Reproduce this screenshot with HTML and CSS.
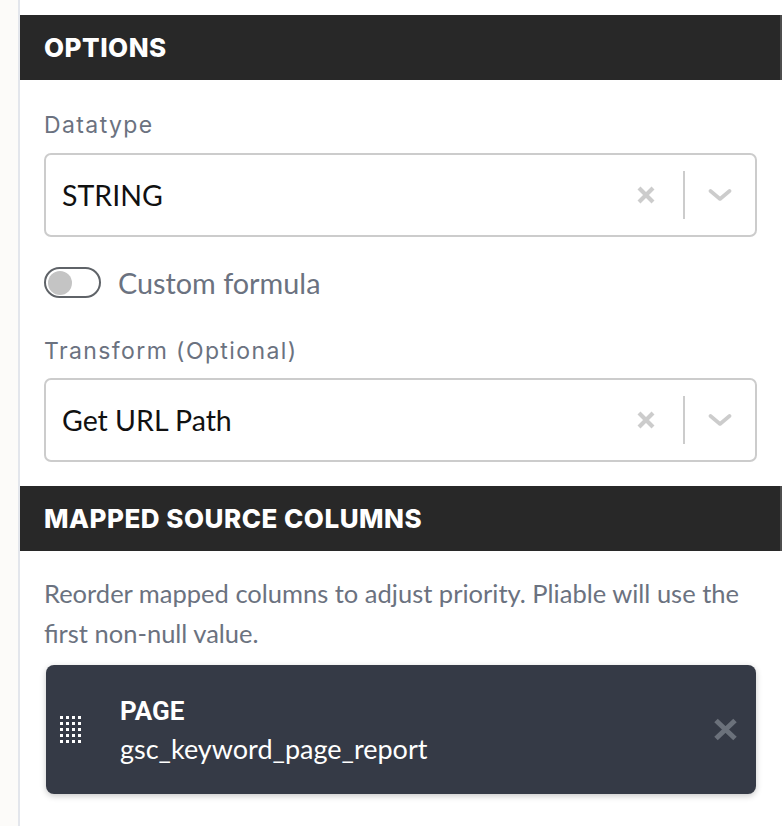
FILE: index.html
```html
<!DOCTYPE html>
<html lang="en">
<head>
<meta charset="utf-8">
<title>Column options</title>
<link rel="stylesheet" href="styles.css">
</head>
<body>
<div class="layout">
  <aside class="rail"></aside>
  <main class="panel">
    <h2 class="section-head">OPTIONS</h2>
    <div class="section-body">
      <label class="field-label">Datatype</label>
      <div class="select">
        <span class="select-value">STRING</span>
        <span class="select-clear">
          <svg viewBox="0 0 20 20" width="20" height="20"><path d="M3 3 L17 17 M17 3 L3 17" stroke="#cccccc" stroke-width="4.2" fill="none"/></svg>
        </span>
        <span class="select-sep"></span>
        <span class="select-arrow">
          <svg viewBox="0 0 24 14" width="24" height="14"><path d="M2.5 3 L12 11 L21.5 3" stroke="#cccccc" stroke-width="3.6" fill="none" stroke-linecap="round" stroke-linejoin="round"/></svg>
        </span>
      </div>
      <div class="toggle-row">
        <span class="toggle"><span class="toggle-knob"></span></span>
        <span class="toggle-label">Custom formula</span>
      </div>
      <label class="field-label field-label--second">Transform (Optional)</label>
      <div class="select select--second">
        <span class="select-value">Get URL Path</span>
        <span class="select-clear">
          <svg viewBox="0 0 20 20" width="20" height="20"><path d="M3 3 L17 17 M17 3 L3 17" stroke="#cccccc" stroke-width="4.2" fill="none"/></svg>
        </span>
        <span class="select-sep"></span>
        <span class="select-arrow">
          <svg viewBox="0 0 24 14" width="24" height="14"><path d="M2.5 3 L12 11 L21.5 3" stroke="#cccccc" stroke-width="3.6" fill="none" stroke-linecap="round" stroke-linejoin="round"/></svg>
        </span>
      </div>
    </div>
    <h2 class="section-head section-head--second">MAPPED SOURCE COLUMNS</h2>
    <div class="section-body">
      <p class="hint">Reorder mapped columns to adjust priority. Pliable will use the first non-null value.</p>
      <div class="mapped-card">
        <span class="drag-handle">
          <svg viewBox="0 0 21 27" width="21" height="27" fill="#ffffff">
            <rect x="0" y="0" width="3" height="3"/><rect x="6" y="0" width="3" height="3"/><rect x="12" y="0" width="3" height="3"/><rect x="18" y="0" width="3" height="3"/>
            <rect x="0" y="6" width="3" height="3"/><rect x="6" y="6" width="3" height="3"/><rect x="12" y="6" width="3" height="3"/><rect x="18" y="6" width="3" height="3"/>
            <rect x="0" y="12" width="3" height="3"/><rect x="6" y="12" width="3" height="3"/><rect x="12" y="12" width="3" height="3"/><rect x="18" y="12" width="3" height="3"/>
            <rect x="0" y="18" width="3" height="3"/><rect x="6" y="18" width="3" height="3"/><rect x="12" y="18" width="3" height="3"/><rect x="18" y="18" width="3" height="3"/>
            <rect x="0" y="24" width="3" height="3"/><rect x="6" y="24" width="3" height="3"/><rect x="12" y="24" width="3" height="3"/><rect x="18" y="24" width="3" height="3"/>
          </svg>
        </span>
        <div class="mapped-text">
          <div class="mapped-name">PAGE</div>
          <div class="mapped-source">gsc_keyword_page_report</div>
        </div>
        <span class="mapped-remove">
          <svg viewBox="0 0 25 23" width="25" height="23"><path d="M3 2.5 L22 20.5 M22 2.5 L3 20.5" stroke="#6b717b" stroke-width="5" fill="none"/></svg>
        </span>
      </div>
    </div>
  </main>
</div>
</body>
</html>
```
FILE: styles.css
```css
* { box-sizing: border-box; }
html, body { margin: 0; padding: 0; background: #ffffff; }
body { font-family: "Lato", "Noto Sans", sans-serif; color: #111111; }

.layout { display: flex; min-height: 826px; }
.rail { width: 20px; flex: 0 0 20px; background: #fcfbf9; border-right: 2px solid #e3e6ec; }
.panel { flex: 1; padding-top: 15px; background: #ffffff; }

.section-head {
  margin: 0;
  height: 65px;
  display: flex;
  align-items: center;
  padding-left: 24px;
  background: #282828;
  border-right: 2px solid #4d4d4d;
  color: #ffffff;
  font-family: "Inter", "Noto Sans", sans-serif;
  font-weight: 800;
  font-size: 26px;
  letter-spacing: 0.5px;
}
.section-head--second { margin-top: 24px; }

.section-body { padding: 0 25px 0 24px; }

.field-label {
  display: block;
  margin-top: 30px;
  height: 30px;
  line-height: 30px;
  font-family: "Inter", "Noto Sans", sans-serif;
  font-size: 23px;
  letter-spacing: 1.4px;
  color: #6b7280;
}
.field-label--second { margin-top: 38px; }

.select {
  margin-top: 13px;
  height: 84px;
  border: 2px solid #cccccc;
  border-radius: 7px;
  display: flex;
  align-items: center;
  padding: 0 23px 0 16px;
}
.select--second { margin-top: 12px; }
.select-value { flex: 1; font-size: 28.5px; color: #111111; }
.select-clear { display: flex; width: 20px; height: 20px; }
.select-sep { width: 2px; height: 48px; background: #cccccc; margin: 0 23px 0 27px; }
.select-arrow { display: flex; width: 24px; height: 14px; }

.toggle-row { margin-top: 30px; display: flex; align-items: center; height: 31px; }
.toggle {
  width: 57px; height: 31px;
  border: 2px solid #5f6368;
  border-radius: 16px;
  display: flex; align-items: center;
  padding-left: 2px;
}
.toggle-knob { width: 24px; height: 24px; border-radius: 50%; background: #c4c4c4; }
.toggle-label { margin-left: 17px; font-size: 28.8px; color: #6b7280; }

.hint {
  margin: 22px 0 0 0;
  font-size: 25.5px;
  line-height: 40px;
  color: #6b7280;
}

.mapped-card {
  margin: 12px 1px 0 2px;
  height: 129px;
  background: #353a46;
  border-radius: 8px;
  box-shadow: 0 2px 6px rgba(0, 0, 0, 0.22);
  display: flex;
  align-items: center;
  padding: 0 18px 0 14px;
}
.drag-handle { display: flex; width: 21px; height: 27px; }
.mapped-text { flex: 1; margin-left: 39px; padding-top: 4px; color: #ffffff; }
.mapped-name { font-family: "Roboto", sans-serif; font-weight: 700; font-size: 26px; line-height: 34px; }
.mapped-source { font-size: 27px; line-height: 42px; }
.mapped-remove { display: flex; width: 25px; height: 23px; }
```
